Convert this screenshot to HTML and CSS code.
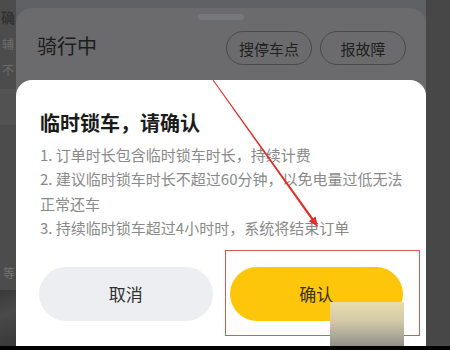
FILE: index.html
```html
<!DOCTYPE html>
<html lang="zh">
<head>
<meta charset="utf-8">
<link rel="stylesheet" href="styles.css">
</head>
<body>
<div class="screen">
  <div class="side-left">
    <div class="bg-title">确</div>
    <div class="bg-line">辅</div>
    <div class="bg-line">不</div>
    <div class="bg-card"></div>
    <div class="bg-spacer"></div>
    <div class="bg-line small">等</div>
    <div class="bg-map"></div>
  </div>
  <div class="main">
    <div class="sheet">
      <div class="handle"></div>
      <div class="sheet-head">
        <div class="sheet-title">骑行中</div>
        <div class="sheet-actions">
          <div class="pill">搜停车点</div>
          <div class="pill">报故障</div>
        </div>
      </div>
    </div>
  </div>
  <div class="side-right"></div>

  <div class="dialog">
    <div class="dlg-title">临时锁车，请确认</div>
    <div class="dlg-list">
      <div>1. 订单时长包含临时锁车时长，持续计费</div>
      <div>2. 建议临时锁车时长不超过60分钟，以免电量过低无法正常还车</div>
      <div>3. 持续临时锁车超过4小时时，系统将结束订单</div>
    </div>
    <div class="dlg-actions">
      <div class="btn btn-cancel">取消</div>
      <div class="btn btn-ok">确认</div>
    </div>
  </div>

  <div class="highlight"></div>
  <div class="watermark"></div>
  <svg class="arrow" width="450" height="350" viewBox="0 0 450 350">
    <polygon points="213.4,79.7 313.2,218.2 315.6,216.6 318,227 308.9,221.2 311.2,219.6 212.6,80.3" fill="#e0302a"/>
  </svg>
  <div class="bottom-bar"></div>
</div>
</body>
</html>
```

FILE: styles.css
```css
* { box-sizing: border-box; }
html, body { margin: 0; padding: 0; }
body {
  font-family: "Noto Sans CJK SC", "Noto Sans", sans-serif;
  background: #474747;
}
.screen {
  width: 450px;
  height: 350px;
  position: relative;
  overflow: hidden;
  display: flex;
  background: #474747;
}
.side-left {
  width: 16px;
  flex: none;
  background: #4c4c4c;
  overflow: hidden;
  display: flex;
  flex-direction: column;
  align-items: flex-start;
  white-space: nowrap;
}
.bg-title {
  font-size: 14px;
  font-weight: 700;
  color: #333;
  line-height: 20px;
  margin: 7px 0 0 1px;
}
.bg-line {
  font-size: 12px;
  color: #6c6c6c;
  line-height: 18px;
  margin: 8px 0 0 2px;
}
.bg-card {
  align-self: stretch;
  height: 36px;
  margin-top: 10px;
  background: #525252;
}
.bg-spacer { flex: 1; }
.bg-line.small { margin: 0 0 8px 3px; color: #747474; }
.bg-map {
  align-self: stretch;
  height: 60px;
  background: linear-gradient(160deg, #3a3a3a, #4a4a4a 40%, #353535);
}
.main {
  width: 410px;
  flex: none;
  padding-top: 8px;
  background: #5f6064;
}
.sheet {
  height: 342px;
  background: #6b6b6d;
  border-radius: 16px 16px 0 0;
  padding-top: 6px;
}
.handle {
  width: 46px;
  height: 6px;
  border-radius: 3px;
  background: #77787b;
  margin: 0 auto;
}
.sheet-head {
  display: flex;
  justify-content: space-between;
  align-items: flex-start;
  margin-top: 11px;
  padding: 0 20px 0 21px;
}
.sheet-title {
  font-size: 20px;
  line-height: 28px;
  margin-top: 1px;
  color: #1c1c1c;
}
.sheet-actions {
  display: flex;
  gap: 8px;
}
.pill {
  width: 86px;
  height: 34px;
  border: 1px solid #4a4a4a;
  border-radius: 17px;
  display: flex;
  align-items: center;
  justify-content: center;
  font-size: 15px;
  color: #1e1e1e;
}
.side-right {
  flex: 1;
  background: #474747;
}
.dialog {
  position: absolute;
  left: 16px;
  top: 80px;
  width: 410px;
  bottom: 4px;
  background: #fff;
  border-radius: 16px 16px 0 0;
  padding: 29px 23px 0;
}
.dlg-title {
  font-size: 20px;
  font-weight: 700;
  line-height: 28px;
  color: #1a1a1a;
  margin: 0 0 6px 1px;
}
.dlg-list {
  font-size: 15px;
  line-height: 24.4px;
  color: #8a8a8a;
  padding-left: 1px;
}
.dlg-actions {
  display: flex;
  gap: 17px;
  margin-top: 26px;
}
.btn {
  flex: 1;
  height: 54.5px;
  border-radius: 28px;
  display: flex;
  align-items: center;
  justify-content: center;
  font-size: 17px;
  font-weight: 400;
}
.btn-cancel { background: #eceef1; color: #2e2e2e; }
.btn-ok { background: #fdc60b; color: #3a3000; }
.highlight {
  position: absolute;
  left: 225px;
  top: 250px;
  width: 195px;
  height: 86px;
  border: 1.5px solid #d65a55;
}
.watermark {
  position: absolute;
  left: 330px;
  top: 302px;
  width: 74px;
  height: 48px;
  background: linear-gradient(to bottom, #e7dcae 0%, #d3c9a6 40%, #a7a396 75%, #85847f 100%);
}
.arrow {
  position: absolute;
  left: 0;
  top: 0;
}
.bottom-bar {
  position: absolute;
  left: 0;
  right: 0;
  bottom: 0;
  height: 4px;
  background: #000;
}
```
